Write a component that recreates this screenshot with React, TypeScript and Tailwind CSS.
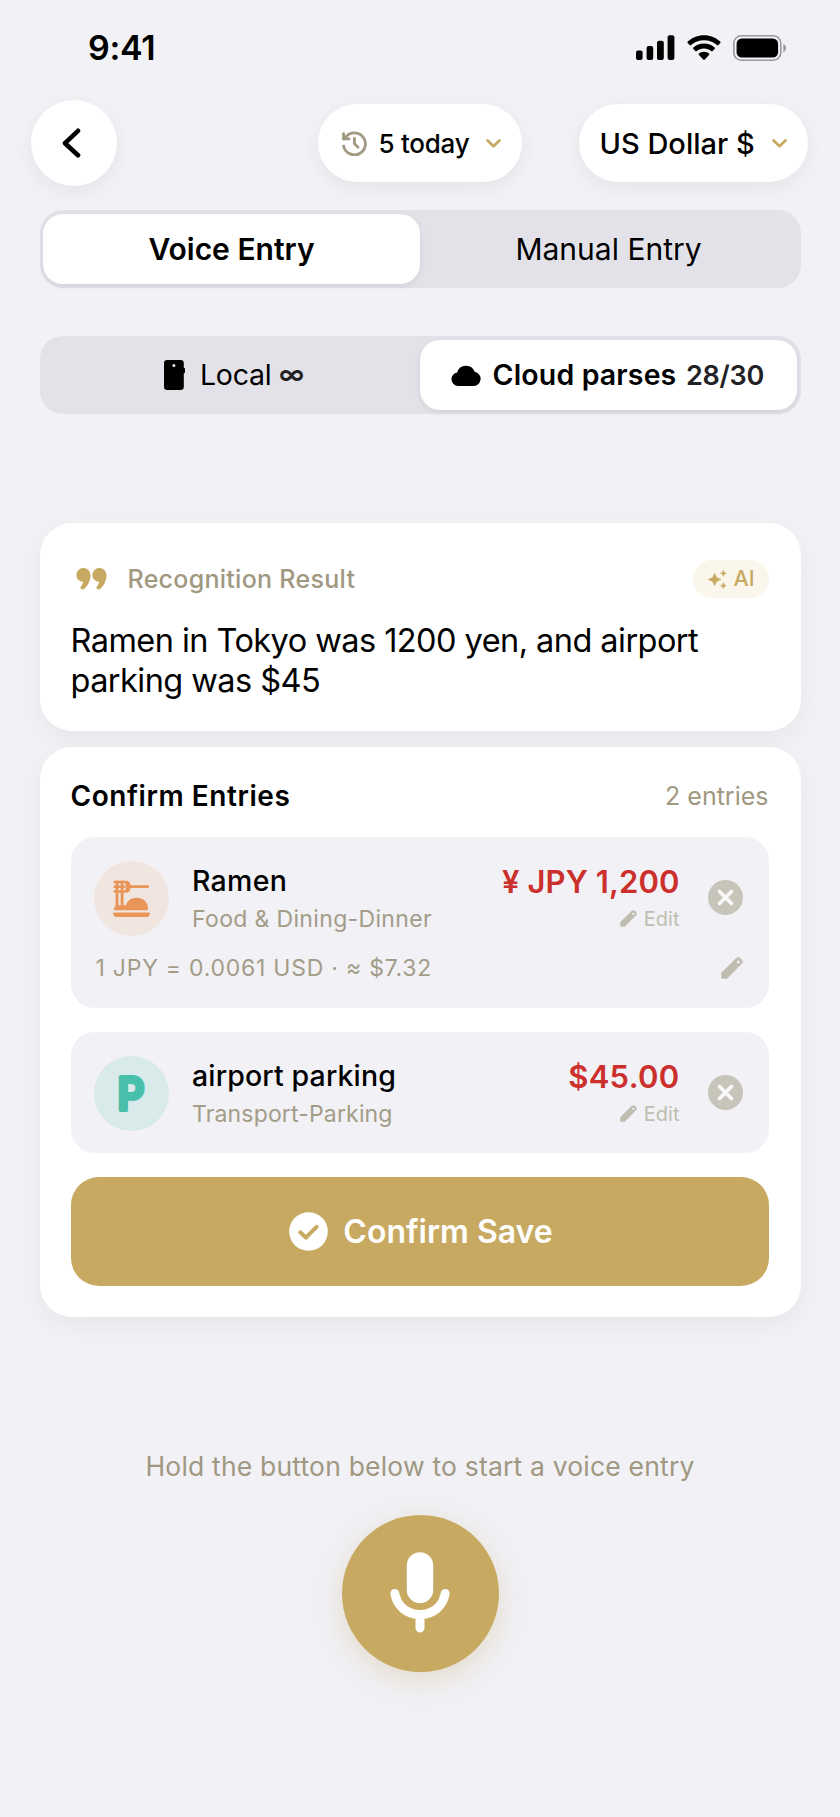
import type { ReactNode } from "react";

function SignalIcon() {
  return (
    <svg width="39" height="25" viewBox="0 0 39 25" fill="black">
      <rect x="0" y="15.5" width="6.6" height="9.5" rx="2" />
      <rect x="10.6" y="11" width="6.6" height="14" rx="2" />
      <rect x="21" y="5.8" width="6.8" height="19.2" rx="2" />
      <rect x="31.6" y="0.3" width="6.8" height="24.7" rx="2" />
    </svg>
  );
}

function WifiIcon() {
  return (
    <svg width="34" height="25" viewBox="0 0 34 25" fill="black">
      <path d="M17 .3C23.3.3 29 2.7 33.2 6.6c.5.5.5 1 .1 1.5l-2 2c-.4.4-1 .4-1.4 0C26.5 7 22 5.200 17 5.200S7.500 7 4.100 10.100c-.4.4-1 .4-1.4 0l-2-2c-.4-.5-.4-1 .1-1.500C5 2.700 10.700.3 17 .3Z" />
      <path d="M17 8.500c4.100 0 7.800 1.500 10.600 4 .5.400.5 1 .1 1.500l-2.100 2.100c-.4.4-.9.4-1.400 0-1.900-1.700-4.400-2.700-7.200-2.700s-5.300 1-7.200 2.700c-.5.4-1 .4-1.400 0L6.300 14c-.4-.5-.4-1.100.1-1.500 2.800-2.500 6.500-4 10.600-4Z" />
      <path d="M17 16.800c2 0 3.700.7 5 1.800.5.4.5 1 0 1.500l-4.200 4.300c-.5.5-1.100.5-1.600 0L12 20.100c-.5-.5-.5-1.100 0-1.500 1.300-1.100 3-1.800 5-1.800Z" />
    </svg>
  );
}

function BatteryIcon() {
  return (
    <svg width="54" height="26" viewBox="0 0 54 26">
      <rect x="0.8" y="0.8" width="47" height="24.4" rx="7.5" fill="none" stroke="#99989e" strokeWidth="1.6" />
      <rect x="3.6" y="3.6" width="41.5" height="18.8" rx="5.2" fill="black" />
      <path d="M50.3 9v8.200c1.800-.6 2.700-2.300 2.700-4.100s-.9-3.500-2.700-4.100Z" fill="#99989e" />
    </svg>
  );
}

function HistoryIcon() {
  return (
    <svg width="25" height="25" viewBox="0 0 25 25" fill="none" stroke="#a09880" strokeWidth="2.8" strokeLinecap="round" strokeLinejoin="round">
      <path d="M1.600 15a11 11 0 1 0 2.400-9.300L1.800 7.700" />
      <path d="M1.600 2.600v5.300h5.500" />
      <path d="M12.500 7.300v5.500l3.500 3.500" />
    </svg>
  );
}

function ChevronDown() {
  return (
    <svg width="15" height="9" viewBox="0 0 15 9" fill="none" stroke="#c7a961" strokeWidth="2.8" strokeLinecap="round" strokeLinejoin="round">
      <path d="M1.600 1.500 7.500 7.200l5.900-5.700" />
    </svg>
  );
}

function PhoneIcon() {
  return (
    <svg width="21" height="30" viewBox="0 0 21 30">
      <rect width="19.8" height="30" rx="3.2" fill="black" />
      <rect x="18" y="7.7" width="3" height="5.6" rx="1" fill="black" />
      <circle cx="9.9" cy="5.5" r="1.5" fill="#e9e8ed" />
    </svg>
  );
}

function CloudIcon() {
  return (
    <svg width="30" height="22" viewBox="0 0 88 66" fill="black">
      <path d="M20 66a20.500 20.500 0 0 1-2.500-40.700 27.500 27.500 0 0 1 52.500-2A21.500 21.500 0 0 1 67 66Z" />
    </svg>
  );
}

function QuoteIcon() {
  return (
    <svg width="31" height="22" viewBox="0 0 92 66" fill="#c7a961">
      <path d="M22 0a21 21 0 0 1 21 22c0 18-10 34-20 41-5 4-13 0-9-7 3-4 6-9 7-14A21 21 0 0 1 22 0Z" />
      <path d="M70 0a21 21 0 0 1 21 22c0 18-10 34-20 41-5 4-13 0-9-7 3-4 6-9 7-14A21 21 0 0 1 70 0Z" />
    </svg>
  );
}

function SparklesIcon() {
  return (
    <svg width="19" height="19" viewBox="0 0 57 57" fill="#c7a961" stroke="#c7a961" strokeWidth="1.5" strokeLinejoin="round">
      <path d="M20 10 26 22.500 39 28.500 26 34.500 20 47 14 34.500 1 28.500 14 22.500Z" />
      <path d="M46 1l2.800 6.200L55 10l-6.200 2.800L46 19l-2.800-6.200L37 10l6.200-2.800Z" />
      <path d="M46 38l2.800 6.200L55 47l-6.200 2.800L46 56l-2.800-6.200L37 47l6.200-2.800Z" />
    </svg>
  );
}

function NoodlesIcon() {
  return (
    <svg width="37" height="37" viewBox="0 0 110 110" fill="#e99558">
      <g fill="none" stroke="#e99558" strokeLinecap="round" strokeLinejoin="round">
        <path d="M5 6h32c8 0 12 5 12 14s-4 14-12 14H5M5 20h28" strokeWidth="7.5" />
        <path d="M46 19.500h57" strokeWidth="8.5" />
        <path d="M12 6v74M27 6v74" strokeWidth="8.5" />
        <path d="M42 8v24" strokeWidth="9" />
      </g>
      <path d="M2 90c0-9 5-15 14-15h23c3-13 15-22 31-22 21 0 34 14 34 31 0 4-1 6-4 6Z" />
      <path d="M4 96.500h102c5 0 5 3 2 8-2 4-5 5.500-9 5.500H11c-4 0-7-1.500-9-5.500-3-5-3-8 2-8Z" />
    </svg>
  );
}

function ParkingIcon() {
  return (
    <svg width="60" height="60" viewBox="0 0 60 60">
      <text
        x="32.3"
        y="46"
        textAnchor="middle"
        transform="scale(0.93 1)"
        className="text-[45px] font-semibold"
        fill="#48bfab"
        stroke="#48bfab"
        strokeWidth="4"
        strokeLinejoin="round"
      >
        P
      </text>
    </svg>
  );
}

function PencilIcon({ size }: { size: number }) {
  return (
    <svg width={size} height={size} viewBox="0 0 22 22" fill="#c0bdb0">
      <path
        fillRule="evenodd"
        d="M.3 16.500c0-.5.2-.9.500-1.200L15.200 1.100c1.300-1.300 2.900-1.200 4.100 0l1.500 1.500c1.300 1.300 1.300 2.900 0 4.200L6.500 21.200c-.3.3-.7.500-1.200.5H1.300c-.6 0-1-.4-1-1ZM17.300 3.400a1.500 1.500 0 1 0 0 3 1.500 1.500 0 0 0 0-3Z"
      />
    </svg>
  );
}

function RemoveIcon() {
  return (
    <svg width="35" height="35" viewBox="0 0 35 35">
      <circle cx="17.5" cy="17.5" r="17.5" fill="#c7c5b9" />
      <path d="M11.500 11.500l12 12M23.500 11.500l-12 12" stroke="#f8f8fa" strokeWidth="3.8" strokeLinecap="round" />
    </svg>
  );
}

function CheckIcon() {
  return (
    <svg width="39" height="39" viewBox="0 0 39 39">
      <circle cx="19.5" cy="19.5" r="19.3" fill="white" />
      <path d="M11.300 20.300 16.800 25.600 27.600 14.800" fill="none" stroke="#c7a961" strokeWidth="4" strokeLinecap="round" strokeLinejoin="round" />
    </svg>
  );
}

function MicIcon() {
  return (
    <svg width="60" height="81" viewBox="0 0 60 81">
      <rect x="16.8" y="0.2" width="26.4" height="51" rx="13.2" fill="white" />
      <path d="M4.800 41.500c2.200 12.500 12 21 25.200 21s23-8.500 25.200-21M30 63v13" fill="none" stroke="white" strokeWidth="9" strokeLinecap="round" />
    </svg>
  );
}

type Entry = {
  name: string;
  nameClass: string;
  category: string;
  categoryClass: string;
  amount: string;
  amountClass: string;
  icon: ReactNode;
  iconBg: string;
  rate?: string;
};

const entries: Entry[] = [
  {
    name: "Ramen",
    nameClass: "tracking-[0.01em]",
    category: "Food & Dining-Dinner",
    categoryClass: "tracking-[0.015em]",
    amount: "¥ JPY 1,200",
    amountClass: "tracking-[0.003em]",
    icon: <NoodlesIcon />,
    iconBg: "bg-[#f1e5e0]",
    rate: "1 JPY = 0.0061 USD · ≈ $7.32",
  },
  {
    name: "airport parking",
    nameClass: "tracking-[0.005em]",
    category: "Transport-Parking",
    categoryClass: "tracking-[0.007em]",
    amount: "$45.00",
    amountClass: "tracking-[0.01em]",
    icon: <ParkingIcon />,
    iconBg: "bg-[#d8eaea]",
  },
];

function EntryCard({ entry }: { entry: Entry }) {
  return (
    <div className="rounded-[24px] bg-[#f1f1f6] pt-6 pr-[26px] pb-[22px] pl-[23px]">
      <div className="flex h-[75px]">
        <div className={`flex size-[75px] shrink-0 items-center justify-center rounded-full ${entry.iconBg}`}>
          {entry.icon}
        </div>
        <div className="ml-[23.5px] flex-1 whitespace-nowrap">
          <p className={`mt-px text-[28.5px] leading-[38px] font-medium ${entry.nameClass}`}>{entry.name}</p>
          <p className={`text-[23px] leading-[38px] text-[#a39c87] ${entry.categoryClass}`}>{entry.category}</p>
        </div>
        <div className="flex flex-col items-end whitespace-nowrap">
          <p className={`mt-[2px] text-[31px] leading-[38px] font-semibold text-[#cb302d] ${entry.amountClass}`}>
            {entry.amount}
          </p>
          <p className="flex h-[37px] items-center gap-[7px] text-[20px] leading-none text-[#c0bdb0]">
            <PencilIcon size={17} />
            Edit
          </p>
        </div>
        <button className="ml-7 self-center pb-[2px]">
          <RemoveIcon />
        </button>
      </div>
      {entry.rate && (
        <div className="mt-4 mb-[2px] flex h-8 items-center justify-between">
          <span className="ml-[2px] text-[23px] leading-none tracking-[0.033em] whitespace-nowrap text-[#a39c87]">
            {entry.rate}
          </span>
          <PencilIcon size={22} />
        </div>
      )}
    </div>
  );
}

export default function App() {
  return (
    <main className="h-[1817px] w-[840px] overflow-hidden bg-[#f1f1f6] font-[Inter,sans-serif] text-black">
      <div className="flex h-[100px] items-center justify-between pr-[53px] pb-[5px] pl-[88px]">
        <span className="text-[34px] leading-none font-semibold tracking-[-0.01em]">9:41</span>
        <div className="flex items-center">
          <SignalIcon />
          <span className="ml-3">
            <WifiIcon />
          </span>
          <span className="ml-3">
            <BatteryIcon />
          </span>
        </div>
      </div>

      <header className="flex h-[86px] items-center pl-[31px]">
        <button className="flex size-[86px] items-center justify-center rounded-full bg-white pr-[5px] shadow-[0_6px_20px_rgba(0,0,0,0.06)]">
          <svg width="19" height="30" viewBox="0 0 19 30" fill="none" stroke="black" strokeWidth="4.6" strokeLinecap="round" strokeLinejoin="round">
            <path d="M16 2.800 3 15.200 16 27.200" />
          </svg>
        </button>
        <button className="ml-[200.5px] flex h-[78px] w-[204.5px] items-center rounded-full bg-white pt-px pl-[24px] shadow-[0_6px_20px_rgba(0,0,0,0.06)]">
          <HistoryIcon />
          <span className="ml-[12px] w-[90px] text-[26px] leading-none font-medium tracking-[-0.01em] whitespace-nowrap">5 today</span>
          <span className="ml-[17px]">
            <ChevronDown />
          </span>
        </button>
        <button className="ml-[56.5px] flex h-[78px] w-[229.5px] items-center rounded-full bg-white pl-[21px] shadow-[0_6px_20px_rgba(0,0,0,0.06)]">
          <span className="w-[155px] text-[29px] leading-none font-medium whitespace-nowrap">US Dollar $</span>
          <span className="ml-[17px]">
            <ChevronDown />
          </span>
        </button>
      </header>

      <div className="mx-[39.5px] mt-6 grid h-[78px] grid-cols-2 rounded-[23px] bg-[#e3e2e8] px-[3.5px] py-[4px] whitespace-nowrap">
        <button className="flex items-center justify-center rounded-[20px] bg-white text-[30px] leading-none font-semibold shadow-[0_2px_6px_rgba(0,0,0,0.08)]">
          Voice Entry
        </button>
        <button className="flex items-center justify-center text-[30px] leading-none">Manual Entry</button>
      </div>

      <div className="mx-[39.5px] mt-12 grid h-[78px] grid-cols-2 rounded-[23px] bg-[#e3e2e8] px-[3.5px] py-[4px] whitespace-nowrap">
        <button className="flex items-center pl-[121px] text-[28.5px] leading-none">
          <PhoneIcon />
          <span className="ml-[15px] w-[71px] tracking-[-0.01em]">Local</span>
          <span className="ml-[8px] text-[26px] font-semibold text-[#222226]">∞</span>
        </button>
        <button className="flex items-center rounded-[20px] bg-white pl-[31px] text-[28.5px] leading-none shadow-[0_2px_6px_rgba(0,0,0,0.08)]">
          <CloudIcon />
          <span className="ml-[11px] w-[185px] font-semibold tracking-[0.005em]">Cloud parses</span>
          <span className="ml-[9px] text-[27px] font-semibold tracking-[-0.01em] text-[#222226]">28/30</span>
        </button>
      </div>

      <section className="mx-[39.5px] mt-[109px] h-[208px] rounded-[32px] bg-white pt-[37px] pr-[31.5px] pl-[31px] shadow-[0_8px_26px_rgba(0,0,0,0.05)]">
        <div className="flex h-[38px] items-center">
          <span className="ml-[5px]">
            <QuoteIcon />
          </span>
          <h2 className="ml-[21px] text-[25px] leading-none font-medium tracking-[0.011em] text-[#a09880]">Recognition Result</h2>
          <div className="ml-auto flex h-[38px] w-[76.5px] items-center rounded-full bg-[#faf6ec] pl-[15px] text-[#c7a961]">
            <SparklesIcon />
            <span className="ml-[7px] text-[21.5px] leading-none font-medium">AI</span>
          </div>
        </div>
        <p className="mt-[23px] text-[32.5px] leading-10 tracking-[-0.017em] whitespace-nowrap">
          Ramen in Tokyo was 1200 yen, and airport
          <br />
          parking was $45
        </p>
      </section>

      <section className="mx-[39.5px] mt-4 h-[570px] rounded-[32px] bg-white pt-[29px] pr-[32px] pl-[31px] shadow-[0_8px_26px_rgba(0,0,0,0.05)]">
        <div className="flex h-10 items-center justify-between">
          <h2 className="text-[28px] leading-none font-semibold tracking-[0.02em]">Confirm Entries</h2>
          <span className="text-[25px] leading-none text-[#a09880]">2 entries</span>
        </div>
        <div className="mt-[21px] flex flex-col gap-6">
          {entries.map((entry) => (
            <EntryCard key={entry.name} entry={entry} />
          ))}
          <button className="flex h-[109px] items-center justify-center gap-[15px] rounded-[28px] bg-[#c7a961] pl-[3px] text-white">
            <CheckIcon />
            <span className="text-[32px] leading-none font-semibold">Confirm Save</span>
          </button>
        </div>
      </section>

      <footer className="mt-[129px] flex flex-col items-center">
        <p className="flex h-10 items-center text-[26.5px] leading-none tracking-[0.007em] whitespace-nowrap text-[#a09880]">
          Hold the button below to start a voice entry
        </p>
        <button className="mt-[29px] flex size-[157px] items-center justify-center rounded-full bg-[#c7a961] pb-[3px] shadow-[0_8px_30px_rgba(199,169,97,0.3)]">
          <MicIcon />
        </button>
      </footer>
    </main>
  );
}
